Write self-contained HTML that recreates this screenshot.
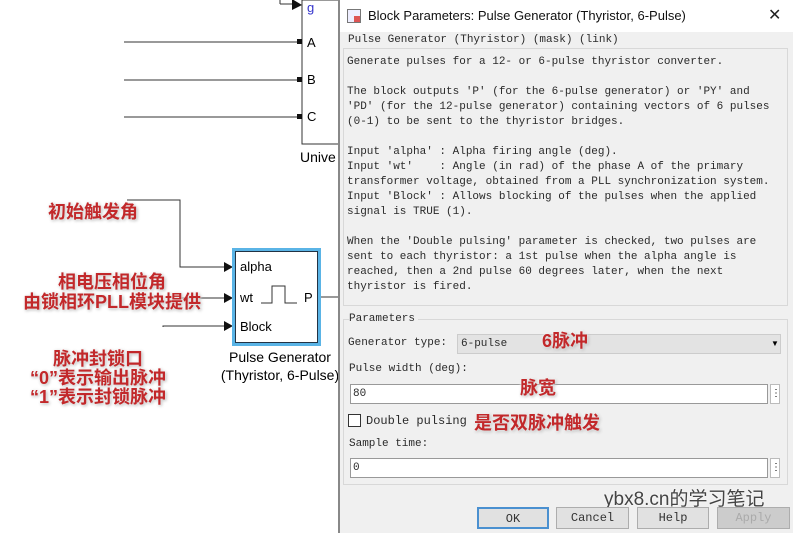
<!DOCTYPE html>
<html><head><meta charset="utf-8"><style>
*{margin:0;padding:0;box-sizing:border-box}
body{width:793px;height:533px;position:relative;background:#fff;overflow:hidden;font-family:"Liberation Sans",sans-serif}
.a{position:absolute}
.r{position:absolute;color:#c2282a;font-family:"Liberation Sans","Noto Sans CJK SC",sans-serif;font-size:18px;font-weight:bold;text-shadow:0 0 3px #fff,1px 1px 3px #999,0 0 2px #fff;white-space:nowrap;line-height:20px;text-align:center}
.m{position:absolute;font-family:"Liberation Mono",monospace;font-size:11px;color:#2a2a2a;white-space:pre;line-height:15px}
.in{position:absolute;background:#fff;border:1px solid #999}
.btn{position:absolute;height:22px;background:#e1e1e1;border:1px solid #adadad;font-family:"Liberation Mono",monospace;font-size:12px;color:#333;text-align:center;line-height:20px}
</style></head><body>
<svg class="a" style="left:0;top:0" width="345" height="420">
<g stroke="#333" stroke-width="1" fill="none">
<path d="M280 4H292"/><path d="M280 0V4"/>
<path d="M124 42H298M124 80H298M124 117H298"/>
<rect x="302" y="0" width="38" height="144"/>
<path d="M127 200H180V267H224"/><path d="M180 298H224"/><path d="M163 327V326H224"/>
<path d="M319 297H340"/>
<path d="M261 303H272V286H285V303H297"/>
</g>
<g fill="#111"><path d="M292 -1L302 5L292 10Z"/><path d="M224 262L233 267L224 272Z"/><path d="M224 293L233 298L224 303Z"/><path d="M224 321L233 326L224 331Z"/>
<rect x="297" y="39" width="5" height="5"/><rect x="297" y="77" width="5" height="5"/><rect x="297" y="114" width="5" height="5"/></g>
<rect x="233.5" y="249.5" width="86" height="95" fill="none" stroke="#5ab4e6" stroke-width="3"/>
<rect x="235.5" y="251.5" width="82" height="91" fill="none" stroke="#234" stroke-width="1"/>
</svg>
<div class="a" style="left:307px;top:0;font-size:13px;color:#33c">g</div>
<div class="a" style="left:307px;top:35px;font-size:13px">A</div>
<div class="a" style="left:307px;top:72px;font-size:13px">B</div>
<div class="a" style="left:307px;top:109px;font-size:13px">C</div>
<div class="a" style="left:300px;top:149px;font-size:14px">Unive</div>
<div class="a" style="left:240px;top:259px;font-size:13px">alpha</div>
<div class="a" style="left:240px;top:290px;font-size:13px">wt</div>
<div class="a" style="left:304px;top:290px;font-size:13px">P</div>
<div class="a" style="left:240px;top:319px;font-size:13px">Block</div>
<div class="a" style="left:212px;top:348px;font-size:14px;text-align:center;width:136px;line-height:18px">Pulse Generator<br>(Thyristor, 6-Pulse)</div>
<div class="r" style="left:48px;top:202px">初始触发角</div>
<div class="r" style="left:14px;top:272px;width:196px">相电压相位角<br>由锁相环PLL模块提供</div>
<div class="r" style="left:18px;top:350px;width:160px;line-height:19px">脉冲封锁口<br>“0”表示输出脉冲<br>“1”表示封锁脉冲</div>

<div class="a" style="left:338px;top:0;width:455px;height:533px;background:#f0f0f0;border-left:2px solid #888"></div>
<div class="a" style="left:340px;top:0;width:453px;height:32px;background:#fff"></div>
<div class="a" style="left:347px;top:9px;width:14px;height:14px;border:1px solid #777;background:#eef"><div class="a" style="left:6px;top:6px;width:6px;height:6px;background:#d55"></div></div>
<div class="a" style="left:368px;top:8px;font-size:13px;color:#111">Block Parameters: Pulse Generator (Thyristor, 6-Pulse)</div>
<div class="a" style="left:768px;top:5px;font-size:16px;color:#222">✕</div>
<div class="a" style="left:343px;top:48px;width:445px;height:258px;border:1px solid #d8d8d8"></div>
<div class="m" style="left:348px;top:33px;background:#f0f0f0;padding-right:3px">Pulse Generator (Thyristor) (mask) (link)</div>
<div class="m" style="left:347px;top:55px">Generate pulses for a 12- or 6-pulse thyristor converter.

The block outputs 'P' (for the 6-pulse generator) or 'PY' and
'PD' (for the 12-pulse generator) containing vectors of 6 pulses
(0-1) to be sent to the thyristor bridges.

Input 'alpha' : Alpha firing angle (deg).
Input 'wt'    : Angle (in rad) of the phase A of the primary
transformer voltage, obtained from a PLL synchronization system.
Input 'Block' : Allows blocking of the pulses when the applied
signal is TRUE (1).

When the 'Double pulsing' parameter is checked, two pulses are
sent to each thyristor: a 1st pulse when the alpha angle is
reached, then a 2nd pulse 60 degrees later, when the next
thyristor is fired.</div>
<div class="a" style="left:343px;top:319px;width:445px;height:166px;border:1px solid #d8d8d8"></div>
<div class="m" style="left:349px;top:312px;background:#f0f0f0;padding-right:3px">Parameters</div>
<div class="m" style="left:348px;top:336px">Generator type:</div>
<div class="a" style="left:457px;top:334px;width:324px;height:20px;background:#e3e3e3;border:1px solid #ccc"></div>
<div class="m" style="left:461px;top:337px">6-pulse</div>
<div class="a" style="left:771px;top:339px;font-size:8px">▼</div>
<div class="m" style="left:349px;top:362px">Pulse width (deg):</div>
<div class="in" style="left:350px;top:384px;width:418px;height:20px"></div>
<div class="m" style="left:353px;top:387px">80</div>
<div class="a" style="left:770px;top:384px;width:10px;height:20px;border:1px solid #bbb;background:#fff;font-size:10px;text-align:center;line-height:18px">⋮</div>
<div class="a" style="left:348px;top:414px;width:13px;height:13px;border:1px solid #333;background:#fff"></div>
<div class="m" style="left:366px;top:414px;font-size:12px">Double pulsing</div>
<div class="m" style="left:349px;top:437px">Sample time:</div>
<div class="in" style="left:350px;top:458px;width:418px;height:20px"></div>
<div class="m" style="left:353px;top:461px">0</div>
<div class="a" style="left:770px;top:458px;width:10px;height:20px;border:1px solid #bbb;background:#fff;font-size:10px;text-align:center;line-height:18px">⋮</div>
<div class="r" style="left:542px;top:331px">6脉冲</div>
<div class="r" style="left:520px;top:378px">脉宽</div>
<div class="r" style="left:474px;top:413px">是否双脉冲触发</div>
<div class="a" style="left:604px;top:484px;font-size:19px;color:#444;font-family:'Liberation Sans','Noto Sans CJK SC',sans-serif;text-shadow:0 0 2px #fff">ybx8.cn的学习笔记</div>
<div class="btn" style="left:477px;top:507px;width:72px;border:2px solid #4a90d0">OK</div>
<div class="btn" style="left:556px;top:507px;width:73px">Cancel</div>
<div class="btn" style="left:637px;top:507px;width:72px">Help</div>
<div class="btn" style="left:717px;top:507px;width:73px;color:#aaa;background:#ccc">Apply</div>
</body></html>
